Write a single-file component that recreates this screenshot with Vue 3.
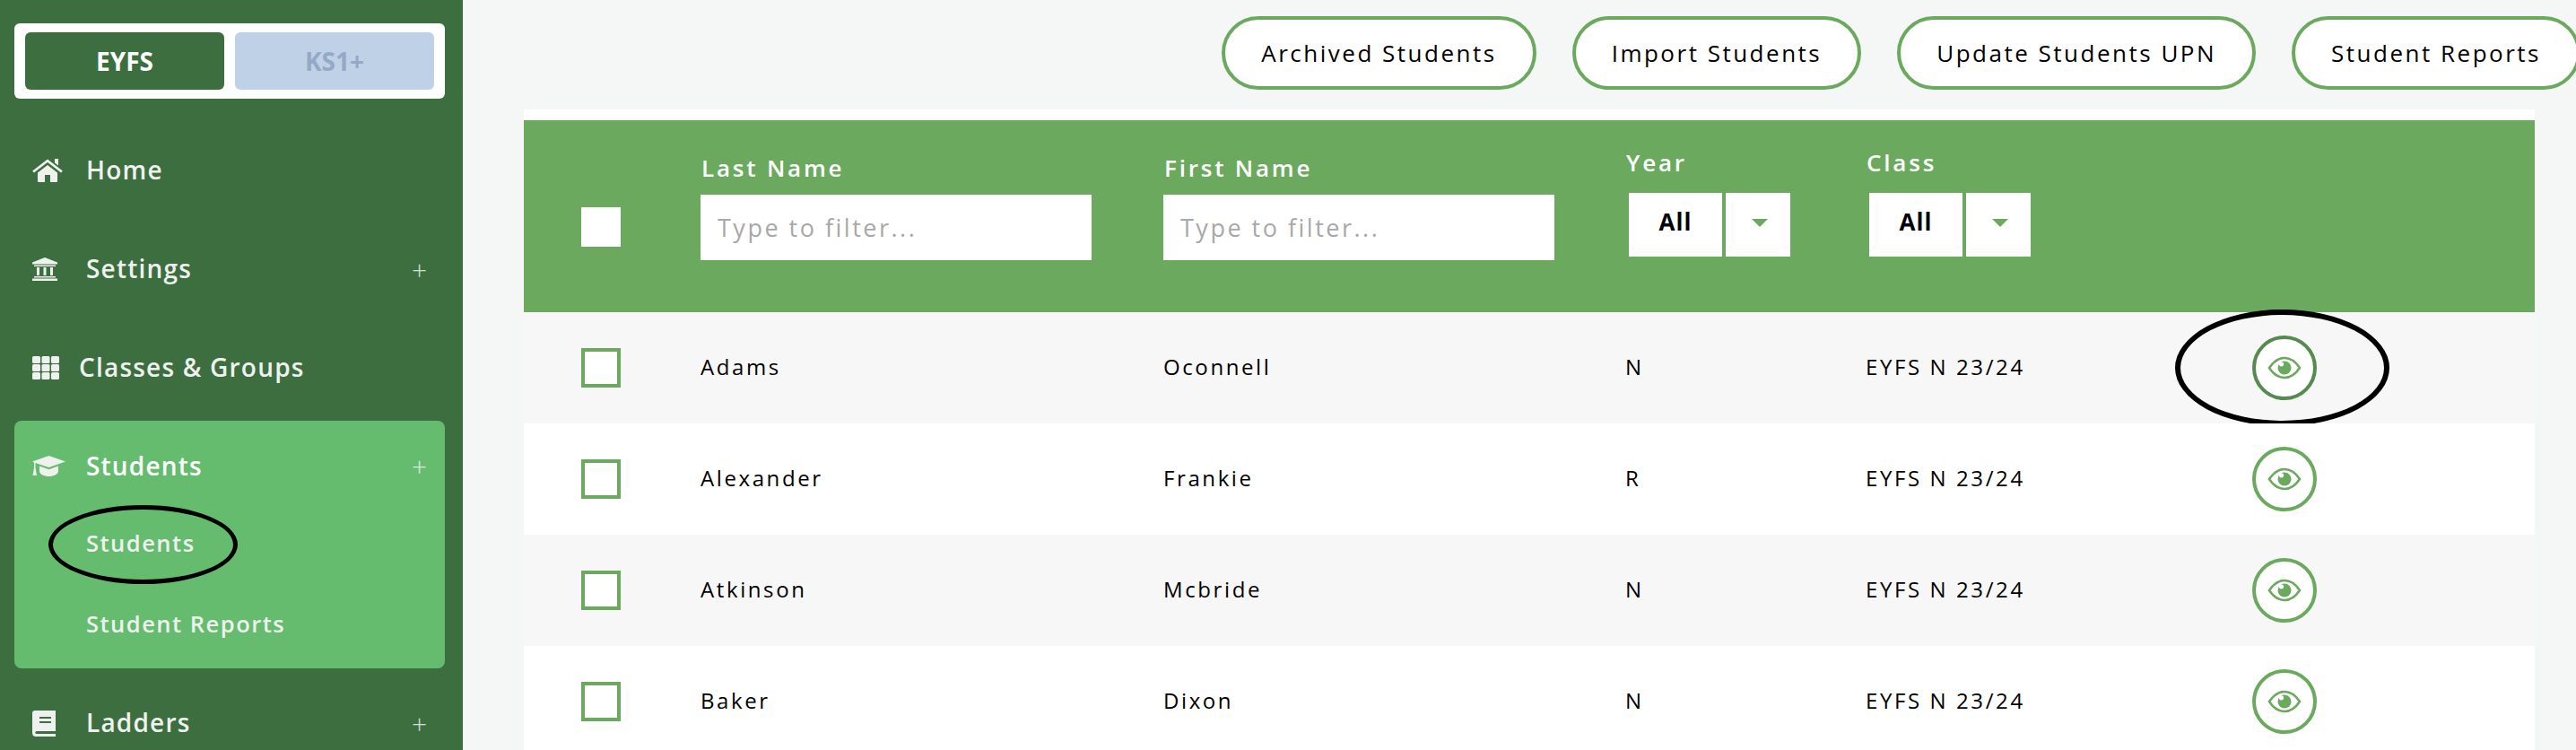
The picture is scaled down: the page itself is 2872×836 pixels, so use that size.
<script setup>
const rows = [
  { last: 'Adams', first: 'Oconnell', year: 'N', cls: 'EYFS N 23/24', marked: true },
  { last: 'Alexander', first: 'Frankie', year: 'R', cls: 'EYFS N 23/24' },
  { last: 'Atkinson', first: 'Mcbride', year: 'N', cls: 'EYFS N 23/24' },
  { last: 'Baker', first: 'Dixon', year: 'N', cls: 'EYFS N 23/24' },
]
const actions = ['Archived Students', 'Import Students', 'Update Students UPN', 'Student Reports']
</script>

<template>
  <div class="page">
    <aside class="sidebar">
      <div class="stage-toggle">
        <div class="stage active">EYFS</div>
        <div class="stage muted">KS1+</div>
      </div>
      <nav class="nav">
        <a class="nav-item">
          <svg class="ic" width="34" height="26" viewBox="0 0 34 26"><path d="M1 14.5 17 2.2l16 12.3" fill="none" stroke="currentColor" stroke-width="2.8"/><path d="M25 0h4v7.500l-4-3zM6 15.500 17 7l11 8.500V25a1 1 0 0 1-1 1h-7v-8h-6v8H7a1 1 0 0 1-1-1z" fill="currentColor"/></svg>
          <span class="label">Home</span>
        </a>
        <a class="nav-item">
          <svg class="ic" width="28" height="26" viewBox="0 0 28 26" fill="currentColor"><path d="M14 0 28 5.500V7.500H0V5.500z"/><path d="M2 8.500h24V10H2zM5 11h3v9H5zM12.500 11h3v9h-3zM20 11h3v9h-3zM2 21h24v1.500H2zM0 23.500h28V26H0z"/></svg>
          <span class="label">Settings</span>
          <span class="plus">+</span>
        </a>
        <a class="nav-item wide-icon">
          <svg class="ic" width="30" height="26" viewBox="0 0 30 26" fill="currentColor"><rect x="0" y="0" width="9" height="8" rx="1.500"/><rect x="10.500" y="0" width="9" height="8" rx="1.500"/><rect x="21" y="0" width="9" height="8" rx="1.500"/><rect x="0" y="9" width="9" height="8" rx="1.500"/><rect x="10.500" y="9" width="9" height="8" rx="1.500"/><rect x="21" y="9" width="9" height="8" rx="1.500"/><rect x="0" y="18" width="9" height="8" rx="1.500"/><rect x="10.500" y="18" width="9" height="8" rx="1.500"/><rect x="21" y="18" width="9" height="8" rx="1.500"/></svg>
          <span class="label">Classes &amp; Groups</span>
        </a>
        <div class="card">
          <a class="nav-item card-head">
            <svg class="ic" width="37" height="23" viewBox="0 0 37 23" fill="currentColor"><path d="M18.500 0 37 6.500 18.500 13 3.500 8v5.500L5 22H.5l1.500-8.500V7.500L0 6.500z"/><path d="M8 11.500l10.500 3.700L29 11.500V17c0 3.500-5 6-10.500 6S8 20.500 8 17z"/></svg>
            <span class="label strong">Students</span>
            <span class="plus">+</span>
          </a>
          <a class="sub-item first">
            <span class="mark mark-nav"></span>
            Students
          </a>
          <a class="sub-item">Student Reports</a>
        </div>
        <a class="nav-item">
          <svg class="ic" width="26" height="29" viewBox="0 0 26 29" fill="currentColor"><path fill-rule="evenodd" d="M3 0h23v23H5c-2 0-2.500 3 0 3h21v3H4c-2.500 0-4-1.500-4-4V3c0-2 1-3 3-3zm5 7v2h13V7zm0 5v2h13v-2z"/></svg>
          <span class="label">Ladders</span>
          <span class="plus">+</span>
        </a>
      </nav>
    </aside>

    <main class="main">
      <div class="toolbar">
        <button v-for="a in actions" :key="a" class="pill">{{ a }}</button>
      </div>
      <section class="table">
        <div class="head grid">
          <div class="cell check-cell"><span class="check plain"></span></div>
          <div class="cell filter">
            <div class="head-label">Last Name</div>
            <div class="input">Type to filter...</div>
          </div>
          <div class="cell filter">
            <div class="head-label">First Name</div>
            <div class="input">Type to filter...</div>
          </div>
          <div class="cell filter tight">
            <div class="head-label">Year</div>
            <div class="select"><span class="sel-val">All</span><span class="sel-btn"><i class="caret"></i></span></div>
          </div>
          <div class="cell filter tight">
            <div class="head-label">Class</div>
            <div class="select"><span class="sel-val">All</span><span class="sel-btn"><i class="caret"></i></span></div>
          </div>
          <div class="cell"></div>
        </div>
        <div v-for="r in rows" :key="r.last" class="row grid">
          <div class="cell check-cell"><span class="check"></span></div>
          <div class="cell text">{{ r.last }}</div>
          <div class="cell text">{{ r.first }}</div>
          <div class="cell text">{{ r.year }}</div>
          <div class="cell text">{{ r.cls }}</div>
          <div class="cell eye-cell">
            <span class="eye-btn" :class="{ hover: r.marked }">
              <svg width="38" height="26" viewBox="0 0 38 26"><path d="M2 13C7 5.500 13 2 19 2s12 3.500 17 11c-5 7.500-11 11-17 11S7 20.500 2 13z" fill="none" stroke="#6baa5e" stroke-width="2.600"/><circle cx="19" cy="13" r="7.500" fill="#6baa5e"/><circle cx="15.500" cy="8.800" r="2.600" fill="#fff"/></svg>
            </span>
            <span v-if="r.marked" class="mark mark-eye"></span>
          </div>
        </div>
      </section>
    </main>
  </div>
</template>

<style>
html, body { margin: 0; background: #f5f7f6; overflow: hidden; }
</style>

<style scoped>
.page { display: flex; width: 2872px; height: 836px; overflow: hidden; font-family: "Open Sans", "Noto Sans", sans-serif; background: #f5f7f6; }
.sidebar { flex: 0 0 516px; box-sizing: border-box; padding: 26px 20px 0 16px; background: #3c6e40; color: #eef1ee; overflow: hidden; }
.stage-toggle { display: flex; gap: 12px; height: 84px; box-sizing: border-box; padding: 10px 12px; background: #fff; border-radius: 6px; }
.stage { flex: 1; display: flex; align-items: center; justify-content: center; border-radius: 6px; font-size: 28px; font-weight: 700; }
.stage.active { background: #3c6e40; color: #fff; }
.stage.muted { background: #bfd1e7; color: #93a9c6; }
.nav { display: flex; flex-direction: column; margin-top: 25px; }
.nav-item { display: flex; align-items: center; height: 110px; padding: 0 20px; position: relative; }
.ic { flex: none; }
.label { position: absolute; left: 80px; padding-bottom: 2px; font-size: 28px; font-weight: 600; letter-spacing: 1.200px; }
.wide-icon .label { left: 72px; }
.strong { color: #fff; }
.plus { margin-left: auto; font-size: 30px; font-weight: 300; opacity: .85; }
.card { background: #65bc6f; border-radius: 8px; margin-top: 4px; margin-bottom: 6px; height: 276px; box-sizing: border-box; }
.card-head { height: 95px; padding-top: 6px; box-sizing: border-box; }
.sub-item { display: block; position: relative; padding-left: 80px; height: 90px; line-height: 82px; font-size: 25.500px; font-weight: 600; letter-spacing: 1.500px; }
.mark { position: absolute; box-sizing: border-box; border-radius: 50%; border: 6px solid #000; pointer-events: none; }
.mark-nav { left: 38px; top: -1px; width: 211px; height: 88px; border-width: 5px; }
.main { flex: 1; min-width: 0; }
.toolbar { display: flex; justify-content: flex-end; gap: 40px; box-sizing: border-box; height: 122px; padding: 18px 0 0; margin-right: -5px; }
.pill { height: 82px; box-sizing: border-box; padding: 0 40px; border: 4px solid #6baa5e; border-radius: 41px; background: #fff; color: #000; font: 500 26px "Open Sans", sans-serif; letter-spacing: 2.500px; white-space: nowrap; }
.table { margin: 0 46px 0 68px; padding-top: 12px; background: #fff; }
.grid { display: grid; grid-template-columns: 197px 516px 515px 268px 431px 1fr; }
.head { height: 214px; background: #6baa5e; }
.cell { box-sizing: border-box; min-width: 0; }
.check-cell { padding-left: 64px; display: flex; align-items: center; }
.head .check-cell { padding-top: 24px; }
.check { display: block; width: 44px; height: 44px; box-sizing: border-box; background: #fff; border: 4px solid #6baa5e; }
.check.plain { border: 0; }
.filter { padding-top: 36px; }
.head-label { color: #fff; font-size: 26px; font-weight: 600; letter-spacing: 2.800px; line-height: 34px; height: 47px; padding-left: 1px; }
.input { box-sizing: border-box; width: 436px; height: 73px; line-height: 73px; padding-left: 19px; background: #fff; color: #a8a8a8; font-size: 27px; letter-spacing: 2.500px; }
.tight { padding-top: 30px; }
.tight .head-label { height: 51px; }
.select { display: flex; gap: 4px; margin-left: 4px; height: 71px; }
.sel-val { width: 104px; background: #fff; color: #000; font-size: 26px; font-weight: 700; letter-spacing: 1px; text-align: center; line-height: 64px; }
.sel-btn { position: relative; width: 72px; background: #fff; display: flex; align-items: center; justify-content: center; }
.caret { display: block; width: 0; height: 0; border-left: 9px solid transparent; border-right: 9px solid transparent; border-top: 9px solid #6baa5e; margin-left: 4px; margin-top: -4px; }
.row { height: 124px; background: #fff; align-items: center; position: relative; }
.row:nth-of-type(even) { background: #f7f7f7; }
.text { font-size: 24px; color: #000; letter-spacing: 2.600px; padding-bottom: 4px; }
.eye-cell { position: relative; }
.eye-btn { display: flex; align-items: center; justify-content: center; width: 72px; height: 72px; box-sizing: border-box; background: #fff; border: 4px solid #6baa5e; border-radius: 50%; }
.eye-btn.hover { border-color: #568a4f; }
.mark-eye { left: -86px; top: -29px; width: 239px; height: 130px; }
</style>
